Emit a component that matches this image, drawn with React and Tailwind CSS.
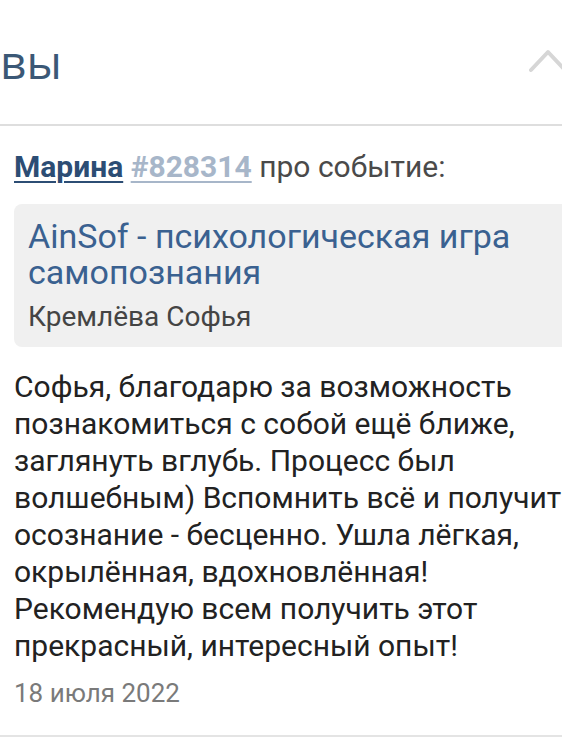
export default function App() {
  return (
    <div className="w-[562px] h-[749px] overflow-hidden bg-white" style={{ fontFamily: "Roboto, 'Noto Sans', sans-serif" }}>
      {/* Section header */}
      <div className="relative h-[124px] flex items-center">
        <h2 className="text-[46px] leading-none font-medium text-[#3b5876] pb-[2px]" style={{ fontFamily: "'Open Sans', sans-serif" }}>
          вы
        </h2>
        <svg className="absolute left-[528px] top-[48px]" width="50" height="26" viewBox="0 0 50 26" fill="none">
          <path d="M3 22 L20 4 L37 22" stroke="#d6d6d6" strokeWidth="4" strokeLinecap="round" strokeLinejoin="round" />
        </svg>
      </div>
      <div className="h-[2px] bg-[#dedede]" />

      {/* Review */}
      <div className="w-[568px] pl-[14px] pt-[23px]">
        <p className="text-[30px] leading-[36px] text-[#4a4a4a] whitespace-nowrap">
          <a className="font-bold text-[#2c4d74] underline underline-offset-[4px] decoration-2">Марина</a>{" "}
          <a className="font-bold text-[#a7b6c9] underline underline-offset-[4px] decoration-2">#828314</a>{" "}
          про событие:
        </p>

        <div className="mt-[19px] mr-[-40px] rounded-lg bg-[#f0f0f0] px-[14px] pt-[14px] pb-[14px]">
          <div className="text-[34px] leading-[36px] text-[#3a6190] w-[500px]">AinSof - психологическая игра самопознания</div>
          <div className="mt-[11px] text-[28px] leading-[32px] text-[#444]">Кремлёва Софья</div>
        </div>

        <p className="mt-[21px] text-[30px] leading-[37px] text-[#222]">
          Софья, благодарю за возможность познакомиться с собой ещё ближе, заглянуть вглубь. Процесс был волшебным) Вспомнить всё и получит осознание - бесценно. Ушла лёгкая, окрылённая, вдохновлённая! Рекомендую всем получить этот прекрасный, интересный опыт!
        </p>

        <div className="mt-[13px] text-[26px] leading-[32px] text-[#7a7a7a]">18 июля 2022</div>
      </div>
      <div className="mt-[26px] h-[2px] bg-[#e4e4e4]" />
    </div>
  );
}
